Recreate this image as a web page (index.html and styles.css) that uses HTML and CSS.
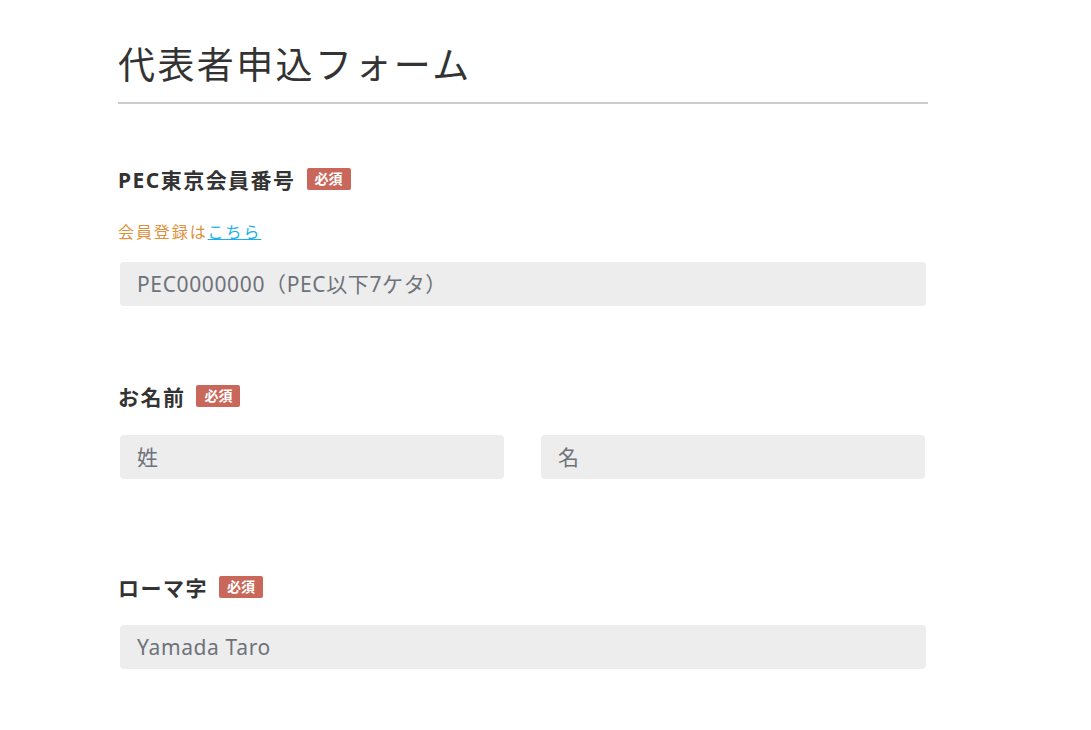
FILE: index.html
```
<!DOCTYPE html>
<html lang="ja">

<head>
    <meta charset="UTF-8">
    <title>代表者申込フォーム</title>
    <link rel="stylesheet" href="styles.css">
</head>

<body>
    <div class="form-wrap">
        <h1 class="form-title">代表者申込フォーム</h1>

        <div class="field field-member">
            <div class="field-label">
                <span>PEC東京会員番号</span>
                <span class="required">必須</span>
            </div>
            <p class="note">会員登録は<a href="#">こちら</a></p>
            <input class="text-input" type="text" placeholder="PEC0000000（PEC以下7ケタ）">
        </div>

        <div class="field field-name">
            <div class="field-label">
                <span>お名前</span>
                <span class="required">必須</span>
            </div>
            <div class="name-row">
                <input class="text-input" type="text" placeholder="姓">
                <input class="text-input" type="text" placeholder="名">
            </div>
        </div>

        <div class="field field-roman">
            <div class="field-label">
                <span>ローマ字</span>
                <span class="required">必須</span>
            </div>
            <input class="text-input" type="text" placeholder="Yamada Taro">
        </div>
    </div>
</body>

</html>
```

FILE: styles.css
```
* {
    padding: 0px;
    margin: 0px;
    box-sizing: border-box;
}

body {
    font-family: "Noto Sans", "Noto Sans CJK JP", sans-serif;
    color: #333;
    background-color: white;
}

.form-wrap {
    width: 810px;
    margin-left: 118px;
    padding-top: 40px;
}

.form-title {
    font-size: 37px;
    font-weight: normal;
    line-height: 50px;
    letter-spacing: 0.065em;
    padding-bottom: 12px;
    border-bottom: 2px solid #ccc;
}

.field-member {
    margin-top: 64px;
}

.field-name {
    margin-top: 79px;
}

.field-roman {
    margin-top: 97px;
}

.field-label {
    display: flex;
    align-items: center;
    height: 22px;
    font-size: 21px;
    font-weight: bold;
    letter-spacing: 0.07em;
}

.required {
    display: inline-block;
    margin-left: 11px;
    padding: 0px 8px;
    height: 22px;
    line-height: 22px;
    font-size: 14px;
    letter-spacing: 0;
    color: white;
    background-color: #c8675a;
    border-radius: 2px;
}

.note {
    margin-top: 30px;
    font-size: 16px;
    line-height: 24px;
    letter-spacing: 0.12em;
    color: #e0903c;
}

.note a {
    color: #1ab0ea;
}

.text-input {
    display: block;
    width: 806px;
    height: 44px;
    margin: 0px 2px;
    padding: 0px 17px;
    border: none;
    border-radius: 4px;
    background-color: #ededed;
    font-family: "Noto Sans", "Noto Sans CJK JP", sans-serif;
    font-size: 21px;
    letter-spacing: 0.03em;
    color: #333;
    outline: none;
}

.text-input::placeholder {
    color: #6e727a;
}

.field-member .text-input {
    margin-top: 18px;
}

.field-roman .text-input {
    margin-top: 27px;
}

.name-row {
    display: flex;
    gap: 37px;
    margin: 28px 2px 0px;
}

.name-row .text-input {
    width: 384px;
    margin: 0px;
}
```
